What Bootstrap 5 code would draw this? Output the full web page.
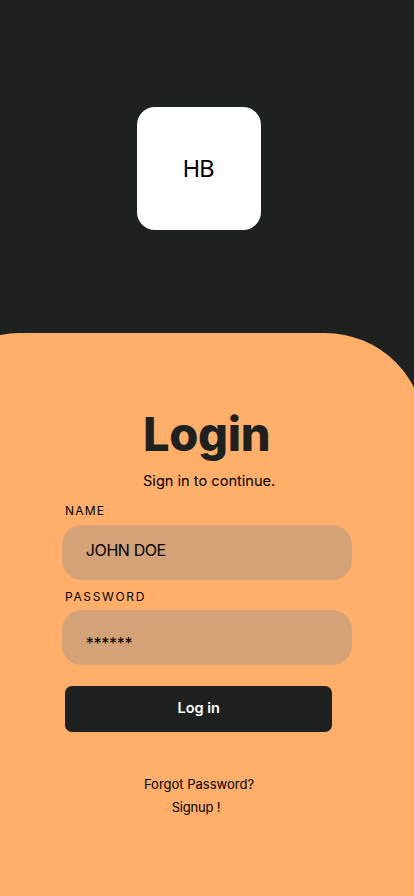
<!DOCTYPE html>
<html lang="en">
<head>
<meta charset="utf-8">
<meta name="viewport" content="width=device-width, initial-scale=1">
<title>Login</title>
<link rel="stylesheet" href="https://cdn.jsdelivr.net/npm/bootstrap@5.3.0/dist/css/bootstrap.min.css">
<style>
body{background:#1d211f;color:#000;font-family:Inter,"Liberation Sans",sans-serif;height:896px}
.hero{height:333px;padding:107px 0 0 137px}
.logo-tile{width:123.6px;height:123.4px;border-radius:18px;font-size:24px;font-weight:400;font-family:"Noto Sans","Open Sans",sans-serif;letter-spacing:-1.4px;padding:0 2px 2px 0}
.sheet{height:563px;width:505px;margin-left:-80px;border-radius:100px 100px 0 0;padding:73px 0 0 142px;background:#ffaf69}
.title{font-size:47px;line-height:56px;letter-spacing:-.3px;font-weight:800;color:#1d211f;padding-left:81px}
.subtitle{font-size:14.6px;line-height:20px;padding-left:81px;margin-top:9px}
.field-label{font-size:12px;line-height:16px;letter-spacing:1.65px;padding-left:3px}
.name-label{letter-spacing:1.2px;margin:12px 0 5.7px}
.pass-label{margin:9.3px 0 5.2px}
.form-control.field,.form-control.field:focus{width:290.4px;height:55px;margin-left:-.2px;border:0;border-radius:20px;background:#d3a277;color:#000;box-shadow:none;padding:0 24px;font-size:16px;line-height:20px;letter-spacing:-.4px}
.form-control.field.name-field{padding-bottom:5px}
.form-control.field.pass-field{padding-top:11px;letter-spacing:-.3px}
.btn.submit,.btn.submit:hover{width:267.4px;height:46px;border:0;border-radius:7px;background:#1d211f;color:#fff;font-size:14.5px;font-weight:600;line-height:20px;padding:0 0 2px;margin:20.8px 0 0 3px}
.links{width:274px;margin-top:41px;font-size:13px}
.links a{color:#000;line-height:23px}
.links .signup{letter-spacing:-.2px;margin-right:6px}
</style>
<script defer src="https://cdn.jsdelivr.net/npm/bootstrap@5.3.0/dist/js/bootstrap.bundle.min.js"></script>
</head>
<body class="overflow-hidden">
<header class="hero"><div class="logo-tile bg-white d-flex align-items-center justify-content-center">HB</div></header>
<main class="sheet">
<h1 class="title mb-0">Login</h1>
<p class="subtitle mb-0">Sign in to continue.</p>
<form>
<label class="field-label name-label d-block" for="name">NAME</label>
<input class="form-control field name-field" id="name" type="text" value="JOHN DOE">
<label class="field-label pass-label d-block" for="pass">PASSWORD</label>
<input class="form-control field pass-field" id="pass" type="text" value="******">
<button class="btn submit d-block" type="button">Log in</button>
</form>
<nav class="links d-flex flex-column align-items-center">
<a class="text-decoration-none" href="#">Forgot Password?</a>
<a class="text-decoration-none signup" href="#">Signup !</a>
</nav>
</main>
</body>
</html>
